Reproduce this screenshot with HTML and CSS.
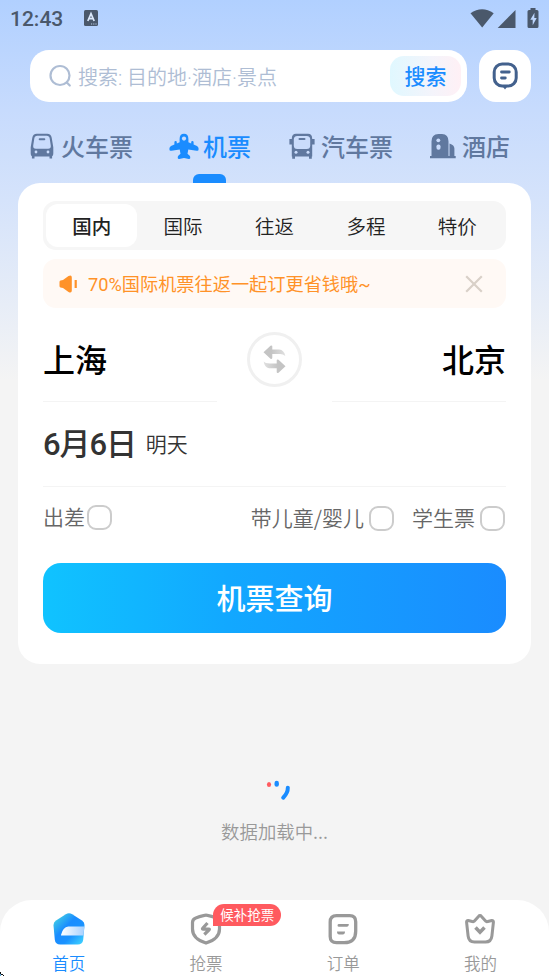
FILE: index.html
```html
<!DOCTYPE html>
<html lang="zh-CN">
<head>
<meta charset="utf-8">
<title>机票</title>
<link rel="stylesheet" href="styles.css">
</head>
<body>
<div class="app">
  <header class="status">
    <span class="clock">12:43</span>
    <svg class="status-app" width="14" height="16" viewBox="0 0 14 16"><rect width="14" height="16" rx="1.5" fill="#4a586b"/><path d="M3.8 11 7 3.6 10.2 11M5 8.7h4" fill="none" stroke="#dbe8fb" stroke-width="1.7"/><path d="M7 14h6" stroke="#b9cce6" stroke-dasharray="1.2 1"/></svg>
    <svg class="status-icons" width="70" height="21" viewBox="0 0 70 21" fill="#4a586b"><path d="M.5 5.300Q12 -2.800 23.700 5.300L12.200 19.500Z"/><path d="M27.700 20 45.500 2v18Z"/><path d="M57.500 3.500q0-1.500 1.500-1.500h1.500V0h5v2H67q1.500 0 1.500 1.500v15q0 1.500-1.500 1.500h-8q-1.500 0-1.500-1.500Z"/><path d="m64.500 4.800-4.200 7h2.400v5.400l4-7.200h-2.400Z" fill="#bdd6fd"/></svg>
  </header>

  <div class="search-row">
    <div class="search">
      <svg width="23" height="24" viewBox="0 0 23 24" fill="none" stroke="#aebdd4" stroke-width="2.200" stroke-linecap="round"><circle cx="11" cy="11.500" r="9.500"/><path d="m17.800 18.500 3 3"/></svg>
      <span class="placeholder">搜索: 目的地·酒店·景点</span>
      <button class="search-btn">搜索</button>
    </div>
    <button class="msg">
      <svg width="26" height="28" viewBox="0 0 26 28"><rect x="2.200" y="2" width="22" height="22" rx="8" fill="none" stroke="#43618d" stroke-width="3"/><path d="M9.500 23h7l-3.500 4.500Z" fill="#43618d"/><path d="M9.500 10h7.800M9.500 16h3.800" stroke="#43618d" stroke-width="2.800" stroke-linecap="round"/></svg>
    </button>
  </div>

  <nav class="tabs">
    <div class="tab train">
      <svg width="24" height="26" viewBox="0 0 24 26"><path d="M6.800.8h10.400q3.800 0 4.500 4l1.600 9.500v6q0 3.200-2.500 3.200H3.200Q.7 23.500.7 20.300v-6l1.600-9.500q.7-4 4.500-4Z" fill="#60789f"/><path d="M7.300 2.800h9.400q2.600 0 3 2.700l1.100 7.200q.3 3-2.700 3H5.900q-3 0-2.700-3l1.100-7.200q.4-2.700 3-2.700Z" fill="#cadcfc"/><path d="M9.700 6.200h4.600" stroke="#60789f" stroke-width="2" stroke-linecap="round"/><path d="M3.200 22v3.500M20.800 22v3.500" stroke="#60789f" stroke-width="2.600"/><circle cx="6" cy="19" r="1.400" fill="#cadcfc"/><circle cx="18" cy="19" r="1.400" fill="#cadcfc"/></svg>
      <span>火车票</span>
    </div>
    <div class="tab plane active">
      <svg width="30" height="26" viewBox="0 0 30 26" fill="#1a8cff"><path d="M10.600 6Q10.600.8 15 .8T19.400 6v3.300l2.800 1.200V9.200q0-1.200 1.200-1.200t1.200 1.200v2.200L28 13q1.800 1.200 1.600 3.200 0 2-2 1.500l-8.300-1.100-.8 4.200 2.200 1.900q.7.800.5 2.500-.4.900-1.400.7L15 25l-4.800.9q-1 .2-1.400-.7-.2-1.700.5-2.500l2.200-1.900-.8-4.200-8.300 1.100q-2 .5-2-1.500Q.2 14.200 2 13l3.400-1.600V9.200Q5.400 8 6.600 8t1.200 1.200v1.300l2.800-1.200Z"/><circle cx="15" cy="5.600" r="2.100" fill="#cadcfc"/></svg>
      <span>机票</span>
    </div>
    <div class="tab bus">
      <svg width="26" height="26" viewBox="0 0 26 26"><path d="M7 .8h12q4.200 0 4.200 5v17.700H2.800V5.800q0-5 4.200-5Z" fill="#60789f"/><rect x="4.800" y="2.900" width="16.400" height="13" rx="3.500" fill="#cadcfc"/><path d="M10.500 6h5" stroke="#60789f" stroke-width="2" stroke-linecap="round"/><path d="M1.700 6v5.500M24.300 6v5.500" stroke="#60789f" stroke-width="2.600"/><path d="M4.600 22v3.700M21.400 22v3.700" stroke="#60789f" stroke-width="2.800"/><circle cx="7" cy="19.300" r="1.500" fill="#cadcfc"/><circle cx="19" cy="19.300" r="1.500" fill="#cadcfc"/></svg>
      <span>汽车票</span>
    </div>
    <div class="tab hotel">
      <svg width="26" height="26" viewBox="0 0 26 26"><path d="M1.500 23.500V8.500Q1.500 1 8.500 1h3.500q6.500 0 6.500 7.500V23.500M18 23.500h1.500V10.500q4.900 1.700 4.900 5v8M0 23h25.700v2.300H0Z" fill="#60789f"/><circle cx="8.300" cy="7.300" r="1.900" fill="#cadcfc"/><rect x="6.500" y="11.500" width="4" height="5.300" rx="1.800" fill="#cadcfc"/></svg>
      <span>酒店</span>
    </div>
  </nav>

  <main class="card">
    <div class="segments">
      <span class="seg on">国内</span><span class="seg">国际</span><span class="seg">往返</span><span class="seg">多程</span><span class="seg">特价</span>
    </div>
    <div class="notice">
      <svg width="19" height="18" viewBox="0 0 19 18"><path d="M1.500 5.500 4 5l5.500-4q3.300-1.500 3.300 1.500v13q0 3-3.300 1.500L4 13l-2.500-.5Q.5 12.200.5 11V7q0-1.200 1-1.500Z" fill="#ff9228"/><path d="M16.700 5v8" stroke="#ff9228" stroke-width="2.200"/></svg>
      <span>70%国际机票往返一起订更省钱哦~</span>
      <svg class="close" width="18" height="18" viewBox="0 0 18 18" stroke="#d9d0c8" stroke-width="2.200"><path d="m1.200 1.200 15.600 15.600M16.800 1.200 1.200 16.800"/></svg>
    </div>
    <div class="route">
      <div class="city">上海</div>
      <div class="swap">
        <svg width="23" height="29" viewBox="0 0 23 29">
          <defs><linearGradient id="fade-r"><stop offset=".35" stop-color="#c4c4c4"/><stop offset="1" stop-color="#e0e0e0"/></linearGradient><linearGradient id="fade-l"><stop offset="0" stop-color="#e0e0e0"/><stop offset=".65" stop-color="#c4c4c4"/></linearGradient></defs>
          <path d="M.5 7.200 7.500.8q1.800-.8 1.800.8v2.800h6.900q5 .5 6.100 6.500-2.500-2-5.700-1.800H9.300v3.700q0 1.600-1.800.9Z" fill="url(#fade-r)"/><path d="M22.500 21.200l-7-6.400q-1.800-.8-1.800.8v2.800H7Q2 18.400.7 16.500q.8 6 5.300 6.700h7.700v3.700q0 1.600 1.800.9Z" fill="url(#fade-l)"/></svg>
      </div>
      <div class="city to">北京</div>
    </div>
    <div class="date"><strong>6月6日</strong><span>明天</span></div>
    <div class="options">
      <label class="opt biz"><span>出差</span><i class="box"></i></label>
      <label class="opt"><span>带儿童/婴儿</span><i class="box"></i></label>
      <label class="opt student"><span>学生票</span><i class="box"></i></label>
    </div>
    <button class="submit">机票查询</button>
  </main>

  <section class="loading">
    <svg width="26" height="24" viewBox="0 0 26 24"><ellipse cx="3" cy="6.500" rx="2.100" ry="2.500" fill="#ff5a5f"/><rect x="8.500" y="2.800" width="4.400" height="6" rx="2.200" fill="#1a8cff"/><path d="M21.800 9.700q.2 5.300-4.600 10" fill="none" stroke="#1a8cff" stroke-width="4" stroke-linecap="round"/></svg>
    <p>数据加载中...</p>
  </section>

  <footer class="nav">
    <div class="item current">
      <svg width="32" height="32" viewBox="0 0 32 32"><defs><linearGradient id="home" x1="0" y1="0" x2="1" y2="1"><stop offset="0" stop-color="#4fe3dc"/><stop offset=".42" stop-color="#1a8cff"/><stop offset=".65" stop-color="#1a92ff"/><stop offset="1" stop-color="#45dcff"/></linearGradient><linearGradient id="shine"><stop offset="0" stop-color="#fff"/><stop offset="1" stop-color="#a7d0ff"/></linearGradient></defs><path d="M12.800 1.200q3.200-2 6.400 0L29 7.500q2.700 1.800 2.500 5l-1.300 14.200q-.6 4.800-5.400 4.800H7.200q-4.800 0-5.400-4.800L.5 12.500q-.2-3.200 2.500-5Z" fill="url(#home)"/><path d="M31.300 13.500h-16q-5.500.5-7.300 8.500-.2.500.7.500h21.800Z" fill="url(#shine)"/></svg>
      <span>首页</span>
    </div>
    <div class="item">
      <svg width="32" height="32" viewBox="0 0 32 32"><path d="M16 2.200q2 0 10.200 2.700 3.300 1.100 3.300 4.600V16q0 10-13.500 14Q2.500 26 2.500 16V9.500q0-3.500 3.300-4.600Q14 2.200 16 2.200Z" fill="none" stroke="#999" stroke-width="3.200"/><path d="m17.500 10-4.800 5.300q-.7.800.5.800h5.500q1.200 0 .4.800L14.300 21.500" fill="none" stroke="#999" stroke-width="3.200" stroke-linejoin="round"/></svg>
      <span>抢票</span>
      <b class="badge">候补抢票</b>
    </div>
    <div class="item">
      <svg width="32" height="32" viewBox="0 0 32 32"><path d="M9.500 2.700h13.200q6 0 6 6v9.500q0 11.500-11.500 11.500H9.500q-6.300 0-6.300-6.300V9q0-6.300 6.300-6.300Z" fill="none" stroke="#999" stroke-width="3.300"/><path d="M12 11h9.800q0 2.800-2 2.800H12q-1.500 0-1.500-1.400T12 11ZM10 18.500h8q0 3-2.200 3h-3.600q-2.200 0-2.200-3Z" fill="#999"/></svg>
      <span>订单</span>
    </div>
    <div class="item">
      <svg width="32" height="32" viewBox="0 0 32 32"><path d="M16 2.600q.8 0 1.500.9l4.300 4.700q1 .8 2 .3l4-1q1.800-.1 1.600 1.800L27.900 23q-.7 6-6.400 6h-11q-5.700 0-6.400-6L2.600 9.300Q2.400 7.400 4.200 7.500l4 1q1 .5 2-.3l4.300-4.700q.7-.9 1.500-.9Z" fill="none" stroke="#999" stroke-width="3" stroke-linejoin="round"/><path d="m11.500 14.500 4.500 4.800 4.500-4.800" fill="none" stroke="#999" stroke-width="3.500"/></svg>
      <span>我的</span>
    </div>
    <svg class="corner" width="4" height="5" viewBox="0 0 4 5"><path d="M0 1h1v2H0ZM1 3h2v1H1ZM3 4h1v1H3Z" fill="#111"/><path d="M0 3h1v2H0Z" fill="#5aa7d8"/></svg>
  </footer>
</div>
</body>
</html>
```

FILE: styles.css
```css
* { box-sizing: border-box; }
body {
  margin: 0;
  font-family: "Noto Sans CJK SC", sans-serif;
  background: #f4f4f4;
}
button { border: 0; padding: 0; font-family: inherit; }
svg { display: block; flex: none; }
.app {
  width: 549px;
  height: 976px;
  overflow: hidden;
  display: flex;
  flex-direction: column;
  background: linear-gradient(#b1d0ff 0, #c7dbfd 110px, #d5e3fb 200px, #f4f4f4 380px);
}

.status {
  height: 50px;
  padding: 8px 9px 0 10px;
  display: flex;
  align-items: flex-start;
}
.clock {
  width: 74px;
  font: 500 21px/22px Roboto, sans-serif;
  color: #4a586b;
}
.status-app { margin-top: 2px; }
.status-icons { margin-left: auto; }

.search-row {
  padding: 0 18px 0 30px;
  display: flex;
  gap: 12px;
}
.search {
  flex: 1;
  height: 52px;
  padding: 0 6px 0 19px;
  border-radius: 19px;
  background: #fff;
  display: flex;
  align-items: center;
}
.placeholder {
  margin: 4px 0 0 6px;
  font-family: Roboto, "Noto Sans CJK SC", sans-serif;
  font-size: 20px;
  line-height: 30px;
  font-weight: 350;
  color: #aebdd4;
  white-space: nowrap;
}
.search-btn {
  margin-left: auto;
  width: 71px;
  height: 40px;
  padding-bottom: 2px;
  border-radius: 14px;
  background: linear-gradient(90deg, #e0f8ff, #f4f4fb 60%, #fff0f5);
  color: #1a8cff;
  font-size: 21px;
  font-weight: 500;
}
.msg {
  width: 52px;
  height: 52px;
  border-radius: 17px;
  background: #fff;
  display: flex;
  align-items: center;
  justify-content: center;
}

.tabs {
  height: 81px;
  padding: 32px 39px 0 30px;
  display: flex;
  justify-content: space-between;
}
.tab {
  position: relative;
  display: flex;
  align-items: flex-start;
  font-size: 24px;
  line-height: 24px;
  font-weight: 500;
  color: #60789f;
}
.tab svg { margin-top: -1px; }
.train { gap: 7px; }
.plane { gap: 4px; margin-left: -2px; }
.bus { gap: 6px; margin-right: -1px; }
.hotel { gap: 6px; }
.active { color: #1a8cff; }
.active::after {
  content: "";
  position: absolute;
  left: 24px;
  top: 40px;
  width: 33px;
  height: 9px;
  border-radius: 6px 6px 0 0;
  background: #1a8cff;
}

.card {
  height: 481px;
  margin: 0 18px;
  padding: 18px 25px 0;
  border-radius: 22px;
  background: #fff;
}
.segments {
  height: 49px;
  padding: 3px;
  border-radius: 13px;
  background: #f6f6f6;
  display: flex;
}
.seg {
  flex: 1;
  border-radius: 12px;
  text-align: center;
  font-size: 19.500px;
  line-height: 43px;
  font-weight: 350;
  color: #222;
}
.seg.on { background: #fff; font-weight: 500; }
.notice {
  height: 49px;
  margin-top: 9px;
  padding: 0 23px 0 16px;
  border-radius: 13px;
  background: #fff9f5;
  display: flex;
  align-items: center;
  font: 400 18.200px/46px Roboto, "Noto Sans CJK SC", sans-serif;
  color: #ff9228;
}
.notice span { margin: 3px 0 0 10px; }
.close { margin-left: auto; }
.route {
  height: 94px;
  display: flex;
  justify-content: space-between;
}
.city {
  width: 174px;
  border-bottom: 1px solid #f4f4f4;
  font-size: 32px;
  line-height: 101px;
  font-weight: 500;
  color: #000;
}
.to { text-align: right; }
.swap {
  width: 55px;
  height: 55px;
  margin-top: 24px;
  border: 3px solid #f0f0f0;
  border-radius: 50%;
  display: flex;
  align-items: center;
  justify-content: center;
}
.date {
  height: 85px;
  border-bottom: 1px solid #f4f4f4;
  display: flex;
  gap: 10px;
  line-height: 82px;
  color: #333;
}
.date strong {
  margin-top: 2px;
  font-family: Roboto, "Noto Sans CJK SC", sans-serif;
  font-size: 31px;
  font-weight: 500;
  letter-spacing: -1.100px;
}
.date span { font-size: 21px; font-weight: 350; }
.options {
  height: 76px;
  padding-top: 19px;
  display: flex;
  align-items: flex-start;
  gap: 18px;
  color: #666;
}
.opt {
  display: flex;
  align-items: center;
  gap: 5px;
  font-size: 21px;
  line-height: 26px;
  font-weight: 350;
}
.opt span { margin-top: -3px; }
.student { margin-right: 1px; }
.biz { margin: -1px auto 0 0; gap: 2px; }
.box {
  width: 25px;
  height: 25px;
  border: 2px solid #ccc;
  border-radius: 9px;
}
.submit {
  display: block;
  width: 463px;
  height: 70px;
  padding-bottom: 2px;
  border-radius: 18px;
  background: linear-gradient(90deg, #10c3ff, #12a8ff 40%, #1a8cff);
  color: #fff;
  font-size: 29px;
  font-weight: 500;
}

.loading {
  flex: 1;
  padding-top: 114px;
  display: flex;
  flex-direction: column;
  align-items: center;
}
.loading svg { margin-left: 8px; }
.loading p {
  margin: 15px 0 0;
  font-size: 18.400px;
  line-height: 28px;
  font-weight: 350;
  color: #999;
}

.nav {
  position: relative;
  height: 76px;
  border-radius: 32px 32px 0 0;
  background: #fff;
  display: flex;
}
.item {
  position: relative;
  flex: 1;
  padding-top: 13px;
  display: flex;
  flex-direction: column;
  align-items: center;
  font-size: 16.500px;
  line-height: 24px;
  font-weight: 350;
  color: #999;
}
.item span { margin-top: 6px; }
.current { color: #1a8cff; }
.badge {
  position: absolute;
  left: 76px;
  top: 4px;
  width: 68px;
  height: 22px;
  border-radius: 11px 11px 11px 0;
  background: #ff5a5f;
  color: #fff;
  font-size: 13.500px;
  line-height: 21px;
  font-weight: 400;
  text-align: center;
}
.corner { position: absolute; left: 0; bottom: 0; }
```
